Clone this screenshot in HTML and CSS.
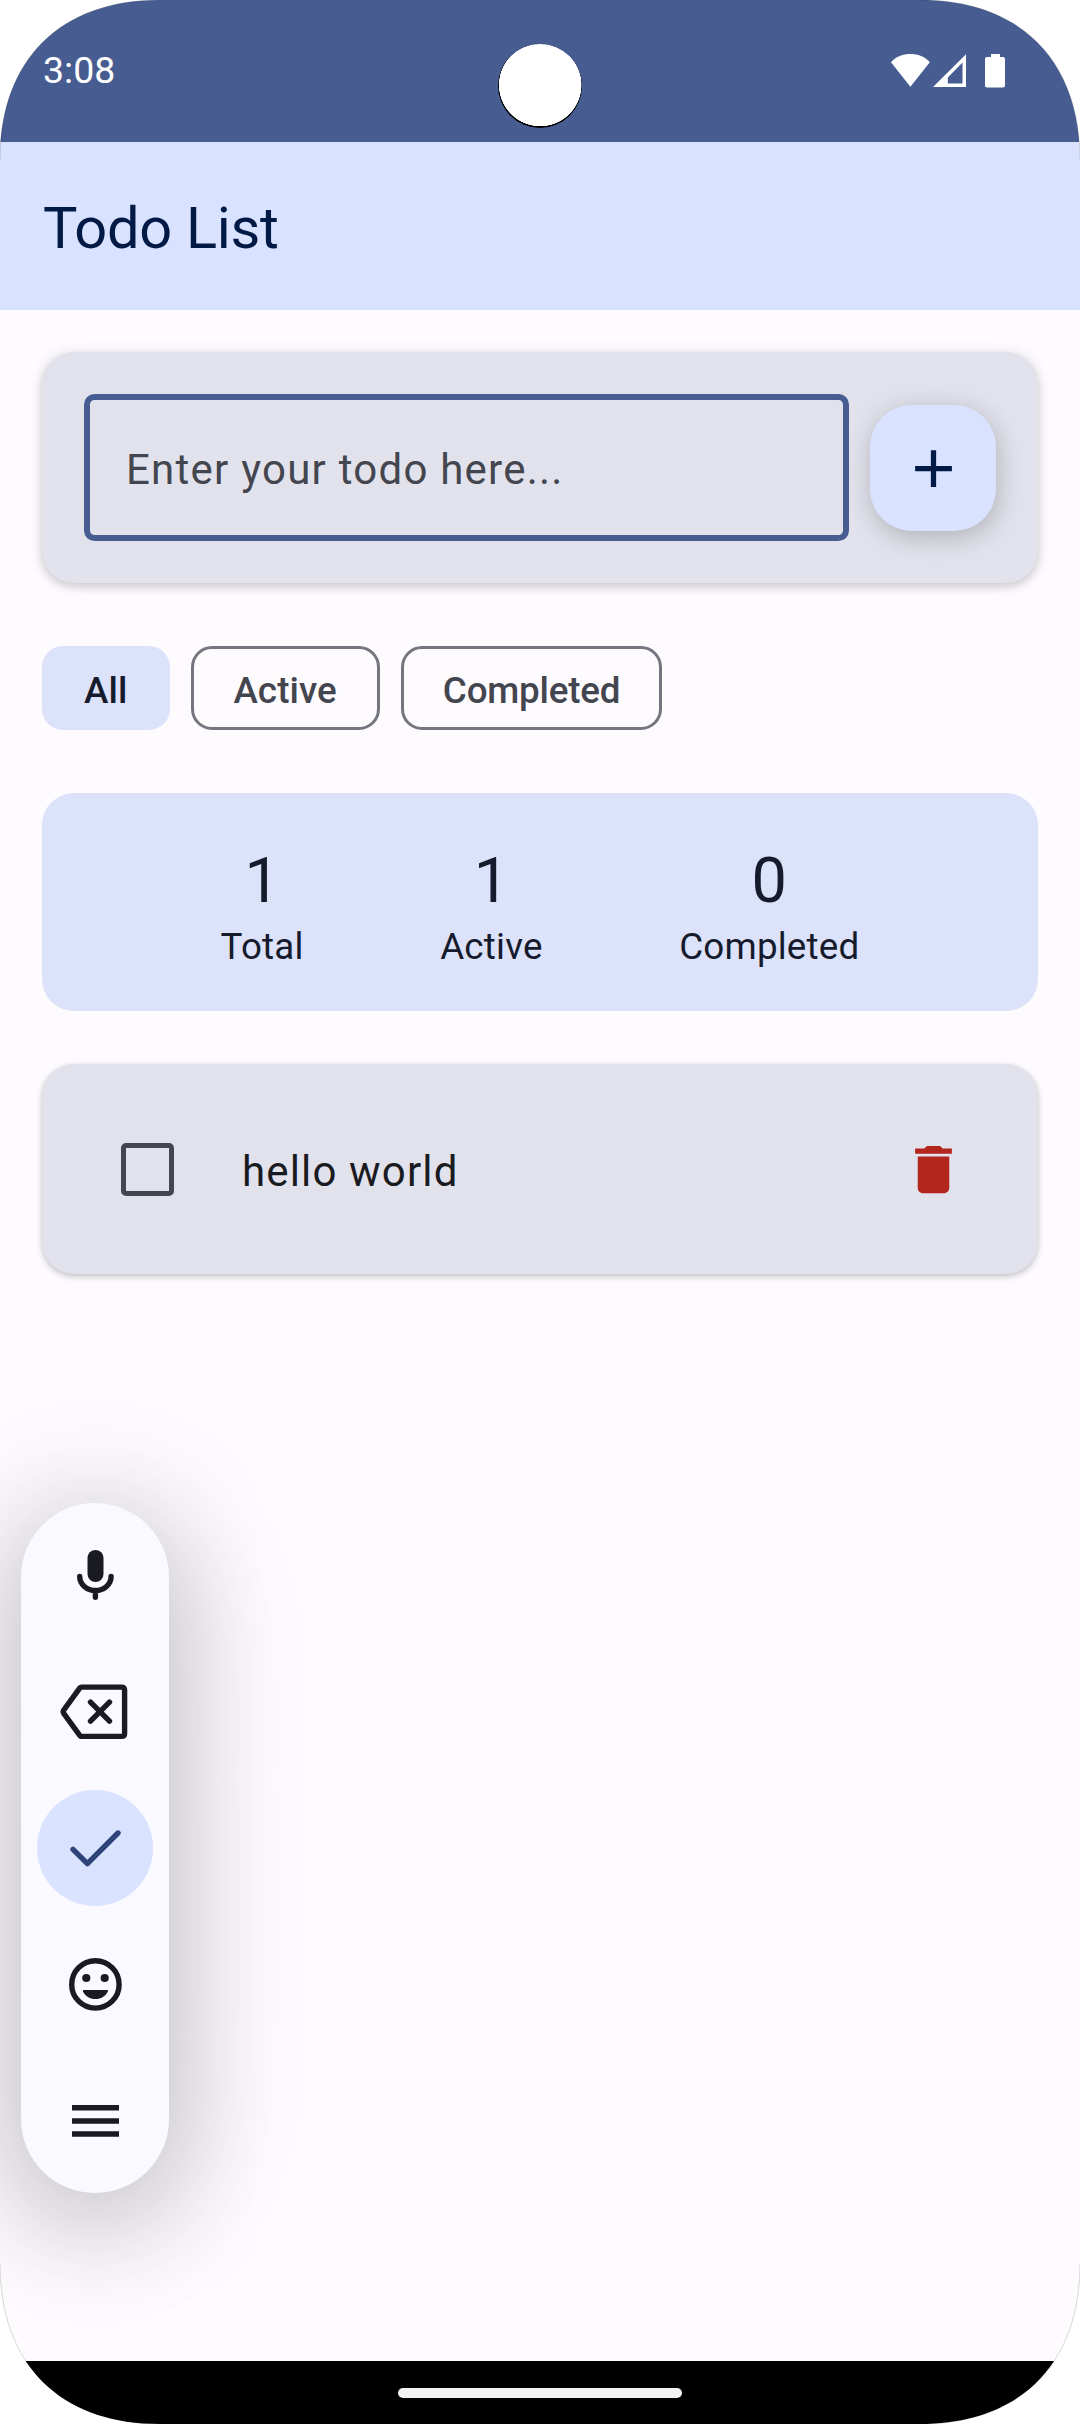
FILE: index.html
```html
<!DOCTYPE html>
<html lang="en">
<head>
<meta charset="utf-8">
<title>Todo List</title>
<link rel="stylesheet" href="styles.css">
</head>
<body>
<div class="screen">
  <header class="status-bar">
    <span class="time">3:08</span>
    <span class="camera"></span>
    <svg class="status-icons" width="116" height="36" viewBox="0 0 116 36" fill="#fff">
      <path d="M20.4 33.7 1 9.2C6 3.500 13 1 20.400 1s14.400 2.500 19.400 8.200z"/>
      <path fill-rule="evenodd" d="M43 34 76 1.300V34zM72.500 9.500 57.800 24.500V30.500H72.500z"/>
      <path d="M101 1h9v3h3q2 0 2 2v26.500q0 2-2 2H97q-2 0-2-2V6q0-2 2-2h4z"/>
    </svg>
  </header>
  <div class="app-bar"><h1 class="title">Todo List</h1></div>

  <main class="content">
    <section class="entry card">
      <div class="field">Enter your todo here...</div>
      <button class="add" aria-label="Add">
        <svg width="63" height="63" viewBox="0 0 24 24" fill="#001945"><path d="M19 13h-6v6h-2v-6H5v-2h6V5h2v6h6z"/></svg>
      </button>
    </section>

    <nav class="filters">
      <span class="chip selected">All</span>
      <span class="chip">Active</span>
      <span class="chip long">Completed</span>
    </nav>

    <section class="stats">
      <div class="stat"><span class="count">1</span><span class="label">Total</span></div>
      <div class="stat"><span class="count">1</span><span class="label">Active</span></div>
      <div class="stat"><span class="count">0</span><span class="label">Completed</span></div>
    </section>

    <article class="todo card">
      <span class="checkbox"></span>
      <span class="todo-text">hello world</span>
      <svg width="63" height="63" viewBox="0 0 24 24" fill="#b3261e"><path d="M6 19c0 1.100.9 2 2 2h8c1.100 0 2-.9 2-2V7H6v12zM19 4h-3.500l-1-1h-5l-1 1H5v2h14V4z"/></svg>
    </article>
  </main>

  <footer class="nav-bar"><span class="handle"></span></footer>

  <aside class="toolbar">
    <svg class="tool" viewBox="0 0 116 116">
      <rect x="50.500" y="33" width="16" height="32" rx="8" fill="#1a1b21"/>
      <path d="M42.700 59.500a15.700 14 0 0 0 31.400 0M58.400 73.500V80.300" class="line"/>
    </svg>
    <svg class="tool" viewBox="0 0 116 116">
      <path transform="translate(0 .7)" d="M44.500 33.400H84.500Q87.600 33.400 87.600 36.400V79.700Q87.600 82.700 84.500 82.700H44.500Q43.500 82.700 42.900 81.900L26.900 60Q25.500 58 26.900 56.100L42.900 34.200Q43.500 33.400 44.500 33.400zM53.500 48.500 72.500 67.500M72.500 48.500 53.500 67.500" class="line"/>
    </svg>
    <svg class="tool active" viewBox="0 0 116 116">
      <path d="M36 59.400 50.400 73.700 81 43" class="line"/>
    </svg>
    <svg class="tool" viewBox="0 0 116 116">
      <circle cx="58.400" cy="58.400" r="23.700" class="line"/>
      <g fill="#1a1b21"><circle cx="49.300" cy="52" r="4.100"/><circle cx="67.700" cy="52" r="4.100"/>
      <path d="M46.500 64H70.300Q71.300 64 70.800 65.400C68.500 70 64 73 58.400 73S48.300 70 46 65.400Q45.500 64 46.500 64z"/></g>
    </svg>
    <svg class="tool" viewBox="0 0 116 116">
      <path d="M35 44.800H82M35 58H82M35 71H82" class="line butt"/>
    </svg>
  </aside>
  <svg class="corners" viewBox="0 0 1080 2424">
    <path d="M0 0H160C60 0 0 60 0 160zM1080 0H920C1020 0 1080 60 1080 160zM0 2424H160C60 2424 0 2364 0 2264zM1080 2424H920C1020 2424 1080 2364 1080 2264z" fill="#fff"/>
    <path d="M160 0C60 0 0 60 0 160M920 0C1020 0 1080 60 1080 160M160 2424C60 2424 0 2364 0 2264M920 2424C1020 2424 1080 2364 1080 2264" fill="none" stroke="#000" stroke-opacity=".3" stroke-width=".5"/>
  </svg>
</div>
</body>
</html>
```
FILE: styles.css
```css
* { box-sizing: border-box; }

body {
  margin: 0;
  background: #fff;
  font-family: Roboto, "Liberation Sans", sans-serif;
}

.screen {
  position: relative;
  display: flex;
  flex-direction: column;
  width: 1080px;
  height: 2424px;
  overflow: hidden;
  background: #fefbff;
}

.status-bar {
  display: grid;
  grid-template-columns: 1fr 84px 1fr;
  height: 142px;
  padding: 0 74px 0 43px;
  background: #475d92;
  color: #fff;
}

.time {
  padding-top: 49px;
  font-size: 37.500px;
  line-height: 43px;
}

.camera {
  position: absolute;
  left: 498px;
  top: 44px;
  width: 84px;
  height: 84px;
  border-radius: 50%;
  background: radial-gradient(circle at 42.200px 41px, #fff 41px, #000 41.500px);
}

.status-icons {
  grid-column: 3;
  justify-self: end;
  margin-top: 53px;
}

.app-bar {
  display: flex;
  align-items: center;
  height: 168px;
  padding: 0 43px;
  background: #d9e2ff;
}

.title {
  margin: 4px 0 0;
  color: #001945;
  font-size: 57.750px;
  font-weight: 400;
  letter-spacing: -.300px;
  line-height: 74px;
}

.content {
  display: flex;
  flex: 1;
  flex-direction: column;
  padding: 42px 42px 0;
}

.card {
  display: flex;
  align-items: center;
  border-radius: 32px;
  background: #e2e2ec;
}

.entry {
  gap: 21px;
  height: 231px;
  padding: 0 42px;
  box-shadow: 0 4px 10px rgba(0, 0, 0, .17), 0 0 16px rgba(0, 0, 0, .07);
}

.field {
  flex: 1;
  height: 147px;
  padding-left: 36px;
  border: 6px solid #475d92;
  border-radius: 10.500px;
  color: #44464f;
  font-size: 42px;
  letter-spacing: 1.240px;
  line-height: 140px;
}

.add {
  display: flex;
  align-items: center;
  justify-content: center;
  width: 126px;
  height: 126px;
  padding: 2px 0 0;
  border: 0;
  border-radius: 42px;
  background: #d9e2ff;
  box-shadow: 2px 8px 24px rgba(0, 0, 0, .17), 0 0 30px rgba(0, 0, 0, .05);
}

.filters {
  display: flex;
  gap: 21px;
  margin-top: 63px;
}

.chip {
  height: 84px;
  padding: 0 39px;
  border: 3px solid #757780;
  border-radius: 21px;
  color: #44464f;
  font-size: 36.750px;
  font-weight: 500;
  letter-spacing: .100px;
  line-height: 83px;
}

.chip:not(.long) { padding-right: 40px; }

.chip.long { letter-spacing: -.200px; }

.chip.selected {
  border-color: #dce2f9;
  background: #dce2f9;
  color: #151b2c;
}

.stats {
  display: flex;
  justify-content: space-evenly;
  height: 218px;
  margin-top: 63px;
  padding: 47px 42px 0;
  border-radius: 32px;
  background: #dce2f9;
  color: #151b2c;
}

.stat {
  display: flex;
  flex-direction: column;
  align-items: center;
}

.count { font-size: 63px; line-height: 82px; }

.label {
  font-size: 36.750px;
  letter-spacing: .200px;
  line-height: 50px;
}

.todo {
  height: 210px;
  margin-top: 53px;
  padding: 0 73px 0 79px;
  box-shadow: 0 3px 6px rgba(0, 0, 0, .2), 0 0 4px rgba(0, 0, 0, .06);
}

.checkbox {
  width: 53px;
  height: 53px;
  border: 5.250px solid #44464f;
  border-radius: 5px;
}

.todo-text {
  flex: 1;
  margin: 6px 0 0 68px;
  color: #1a1b21;
  font-size: 42px;
  letter-spacing: 1.150px;
  line-height: 60px;
}

.nav-bar {
  display: flex;
  align-items: center;
  justify-content: center;
  height: 63px;
  background: #000;
}

.handle {
  width: 284px;
  height: 10px;
  border-radius: 5px;
  background: #f2f2f2;
}

.toolbar {
  position: absolute;
  left: 21px;
  top: 1503px;
  display: flex;
  flex-direction: column;
  align-items: center;
  gap: 20.400px;
  width: 148px;
  height: 690px;
  padding-top: 14px;
  border-radius: 74px;
  background: #f9f9ff;
  box-shadow: 0 24px 110px 10px rgba(0, 0, 0, .19), 0 16px 150px 20px rgba(0, 0, 0, .08);
}

.tool {
  flex: none;
  width: 116px;
  height: 116px;
  border-radius: 50%;
}

.tool.active { background: #d9e2ff; }

.line {
  fill: none;
  stroke: #1a1b21;
  stroke-width: 5.400;
  stroke-linecap: round;
  stroke-linejoin: round;
}

.active .line { stroke: #2f4578; }

.butt { stroke-linecap: butt; }

.corners {
  position: absolute;
  inset: 0;
  width: 1080px;
  height: 2424px;
}
```
